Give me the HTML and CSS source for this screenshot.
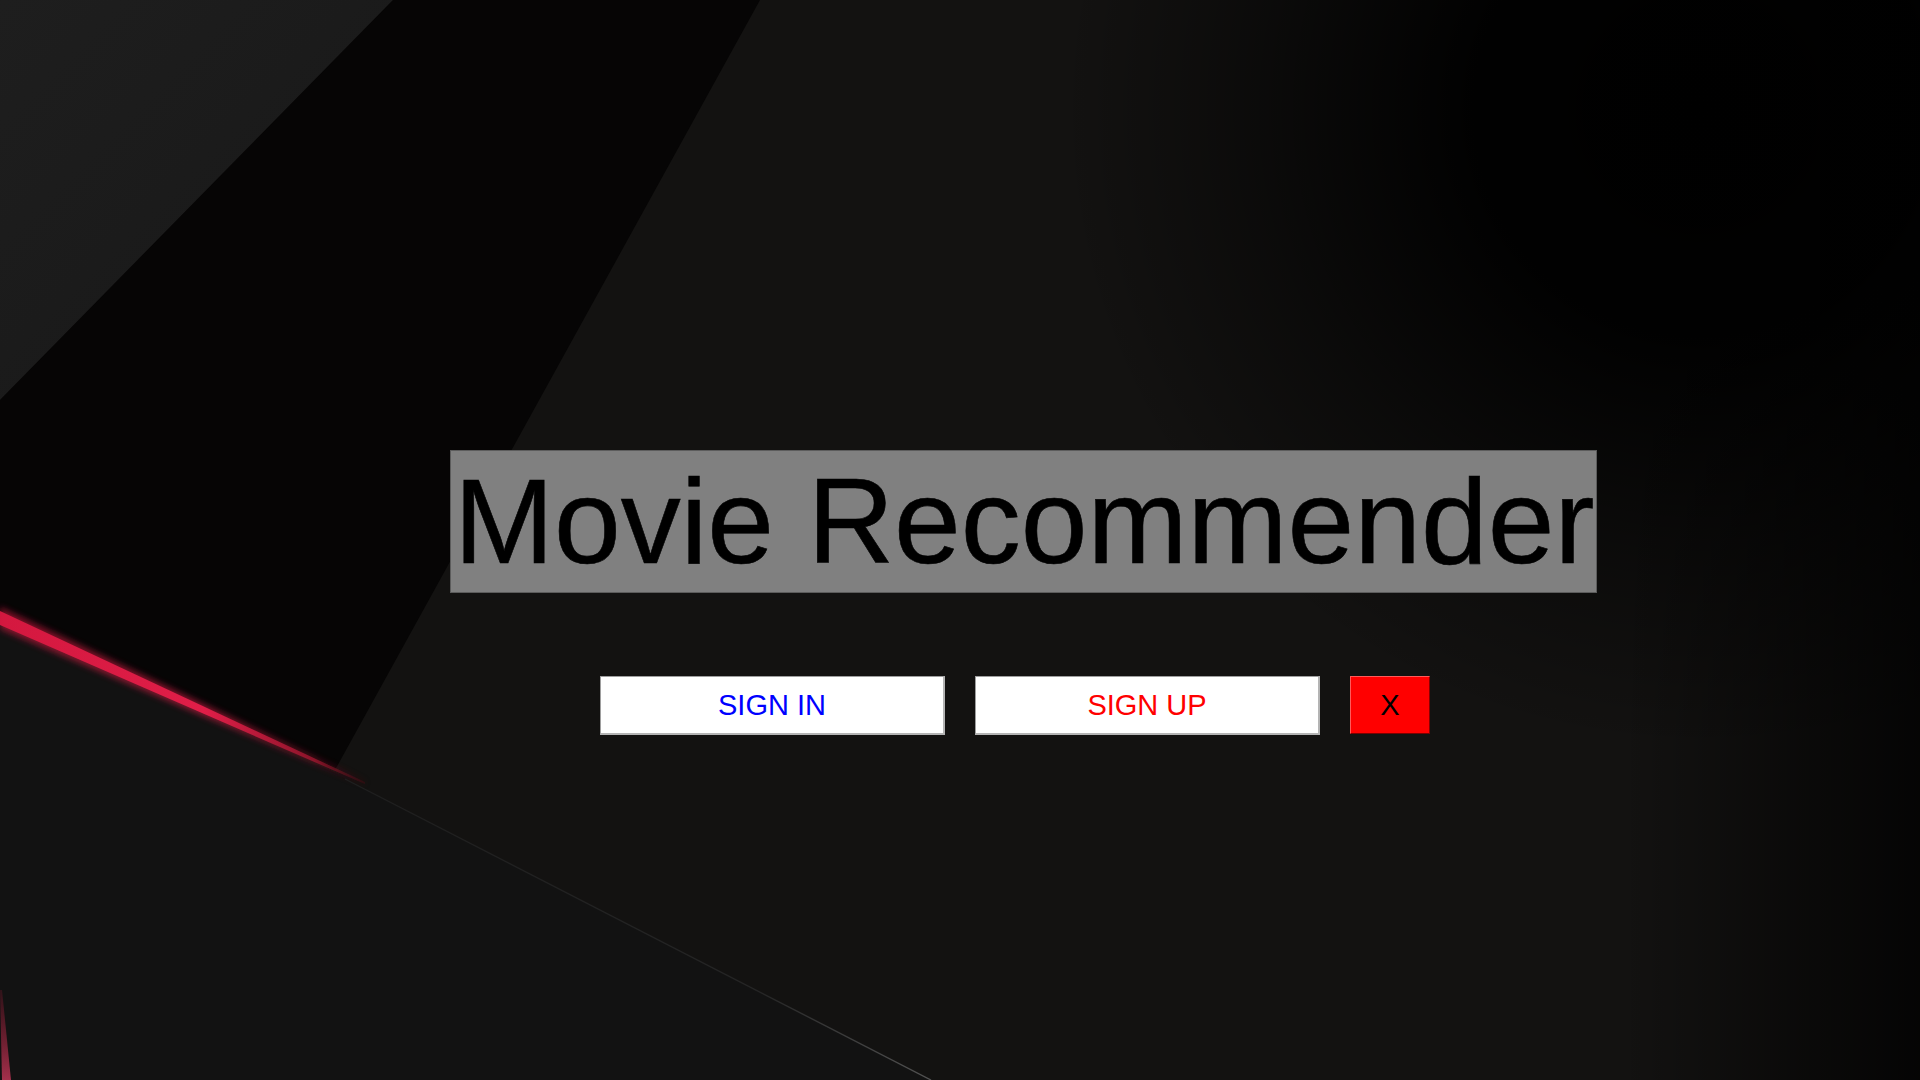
FILE: index.html
```html
<!DOCTYPE html>
<html lang="en">
<head>
<meta charset="utf-8">
<title>Movie Recommender</title>
<link rel="stylesheet" href="styles.css">
</head>
<body>
<svg class="backdrop" viewBox="0 0 1920 1080" preserveAspectRatio="none" aria-hidden="true">
  <defs>
    <radialGradient id="tr" cx="1700" cy="110" r="640" gradientUnits="userSpaceOnUse">
      <stop offset="0" stop-color="#000" stop-opacity="1"/>
      <stop offset="0.35" stop-color="#000" stop-opacity="0.95"/>
      <stop offset="0.7" stop-color="#000" stop-opacity="0.4"/>
      <stop offset="1" stop-color="#000" stop-opacity="0"/>
    </radialGradient>
    <linearGradient id="re" x1="1620" y1="0" x2="1920" y2="0" gradientUnits="userSpaceOnUse">
      <stop offset="0" stop-color="#000" stop-opacity="0"/>
      <stop offset="1" stop-color="#000" stop-opacity="0.75"/>
    </linearGradient>
    <linearGradient id="tl" x1="0" y1="0" x2="300" y2="300" gradientUnits="userSpaceOnUse">
      <stop offset="0" stop-color="#1e1e1e"/>
      <stop offset="1" stop-color="#191919"/>
    </linearGradient>
    <linearGradient id="red" x1="0" y1="0" x2="370" y2="0" gradientUnits="userSpaceOnUse">
      <stop offset="0" stop-color="#d81840" stop-opacity="0.95"/>
      <stop offset="0.55" stop-color="#e01e48"/>
      <stop offset="0.85" stop-color="#a0162f" stop-opacity="0.8"/>
      <stop offset="1" stop-color="#3a0a10" stop-opacity="0.4"/>
    </linearGradient>
    <linearGradient id="red2" x1="0" y1="960" x2="0" y2="1080" gradientUnits="userSpaceOnUse">
      <stop offset="0" stop-color="#a0102c" stop-opacity="0"/>
      <stop offset="1" stop-color="#c8385a" stop-opacity="0.8"/>
    </linearGradient>
    <linearGradient id="gl" x1="340" y1="0" x2="940" y2="0" gradientUnits="userSpaceOnUse">
      <stop offset="0" stop-color="#1e1e1e"/>
      <stop offset="0.7" stop-color="#252525"/>
      <stop offset="1" stop-color="#555"/>
    </linearGradient>
    <filter id="glow" x="-10%" y="-50%" width="120%" height="200%">
      <feGaussianBlur stdDeviation="3"/>
    </filter>
  </defs>
  <rect x="0" y="0" width="1920" height="1080" fill="#131211"/>
  <rect x="0" y="0" width="1920" height="1080" fill="url(#tr)"/>
  <rect x="1600" y="0" width="320" height="1080" fill="url(#re)"/>
  <polygon points="0,0 393,0 0,400" fill="url(#tl)"/>
  <polygon points="393,0 760,0 335,770 0,612 0,400" fill="#060505"/>
  <polygon points="0,620 340,776 931,1080 0,1080" fill="#121212"/>
  <polygon points="0,607 0,629 365,785 365,781" fill="url(#red)" filter="url(#glow)" opacity="0.6"/>
  <polygon points="0,611 0,625 365,784 365,782" fill="url(#red)"/>
  <line x1="345" y1="779" x2="931" y2="1080" stroke="url(#gl)" stroke-width="1.4"/>
  <polygon points="0,990 2,990 11,1080 2,1080" fill="url(#red2)"/>
</svg>

<main class="screen">
  <h1 class="title">Movie Recommender</h1>
  <div class="actions">
    <button class="btn btn-signin" type="button">SIGN IN</button>
    <button class="btn btn-signup" type="button">SIGN UP</button>
    <button class="btn btn-close" type="button">X</button>
  </div>
</main>
</body>
</html>
```

FILE: styles.css
```css
html, body {
  margin: 0;
  padding: 0;
  width: 1920px;
  height: 1080px;
  overflow: hidden;
  background: #131211;
  font-family: "Liberation Sans", Arial, sans-serif;
}

.backdrop {
  position: absolute;
  left: 0;
  top: 0;
  width: 1920px;
  height: 1080px;
  z-index: 0;
}

.screen {
  position: relative;
  z-index: 1;
  display: flex;
  flex-direction: column;
  align-items: flex-start;
  padding: 450px 0 0 450px;
  box-sizing: border-box;
  height: 1080px;
}

.title {
  margin: 0;
  font-family: "Liberation Sans", Arial, sans-serif;
  font-weight: 400;
  font-size: 120px;
  line-height: 138px;
  color: #000;
  -webkit-text-stroke: 0.6px #000;
  background: #808080;
  border: 1px solid #5c5c5c;
  padding: 1px 3px 2px 3px;
  white-space: nowrap;
  width: 1139px;
}

.actions {
  display: flex;
  gap: 30px;
  margin: 83px 0 0 150px;
}

.btn {
  box-sizing: border-box;
  height: 59px;
  width: 345px;
  padding: 0;
  margin: 0;
  font-family: "Liberation Sans", Arial, sans-serif;
  font-size: 29px;
  line-height: 1;
  background: #fff;
  border-style: solid;
  border-width: 1px 2px 2px 1px;
  border-color: #9e9e9e #b4b4b4 #b4b4b4 #9e9e9e;
  display: flex;
  align-items: center;
  justify-content: center;
  cursor: pointer;
}

.btn-signin {
  color: #0000ff;
}

.btn-signup {
  color: #ff0000;
}

.btn-close {
  width: 80px;
  height: 58px;
  background: #ff0000;
  color: #000;
  border-width: 1px;
  border-color: #ff5a5a #8a0000 #7a0000 #ff5a5a;
}
```
